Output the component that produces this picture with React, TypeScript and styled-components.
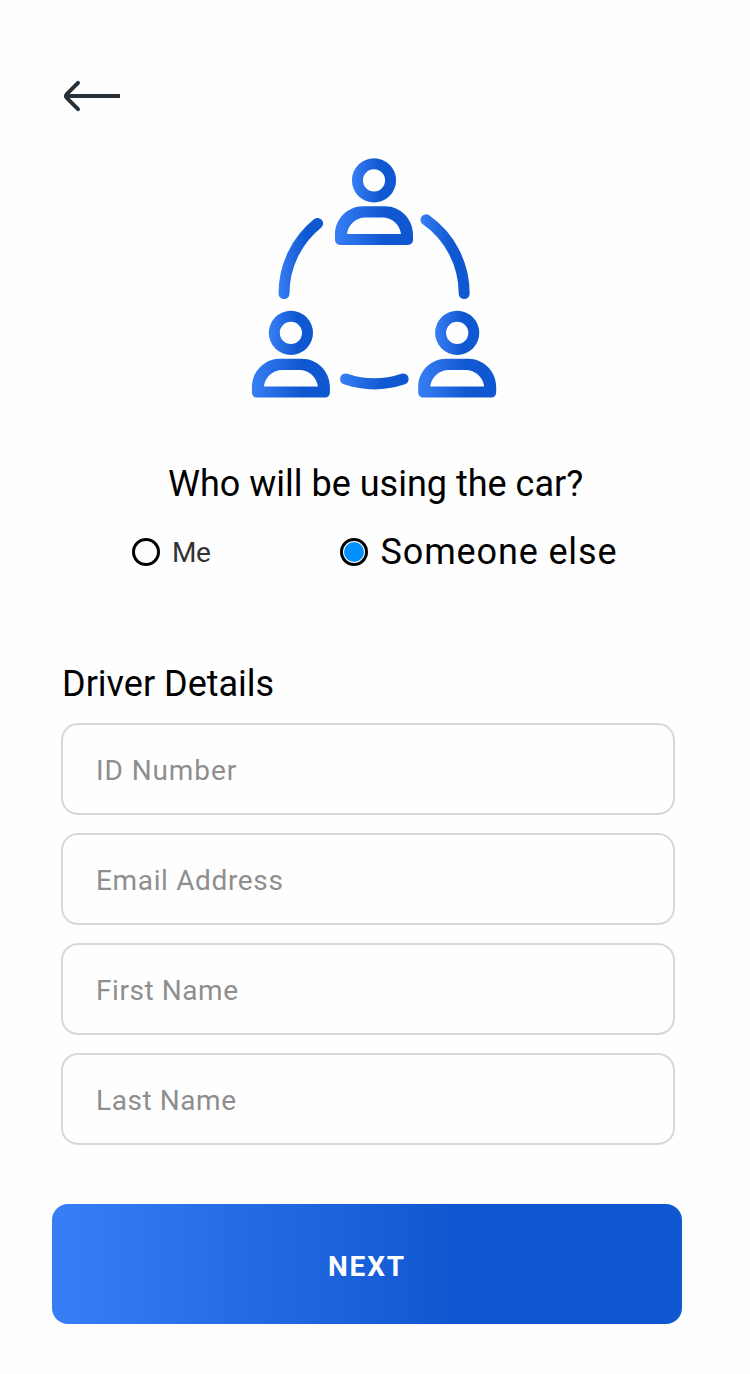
import React, { useState } from 'react';
import styled, { createGlobalStyle } from 'styled-components';

const GlobalStyle = createGlobalStyle`
  * { box-sizing: border-box; }
  body { margin: 0; background: #fefefe; }
`;

const Screen = styled.main`
  display: flex;
  flex-direction: column;
  width: 750px;
  height: 1374px;
  padding: 76px 68px 50px 52px;
  background: #fefefe;
  color: #000;
  font-family: Roboto, "Liberation Sans", sans-serif;
`;

const BackButton = styled.button`
  align-self: flex-start;
  width: 72px;
  height: 40px;
  padding: 0;
  margin-left: 8px;
  border: 0;
  background: none;
  cursor: pointer;
  svg { display: block; }
`;

const Illustration = styled.svg`
  display: block;
  flex: none;
  width: 260px;
  height: 256px;
  margin: 34px 0 0 192px;
`;

const Question = styled.h1`
  margin: 57px 0 0 116px;
  font-size: 36px;
  line-height: 42px;
  font-weight: 400;
  letter-spacing: 0;
  white-space: nowrap;
`;

const Options = styled.div`
  display: flex;
  align-items: center;
  height: 42px;
  margin: 26px 0 0 80px;
`;

const Option = styled.label<{ $selected: boolean }>`
  display: flex;
  align-items: center;
  gap: ${(p) => (p.$selected ? 12.5 : 12)}px;
  width: 208px;
  white-space: nowrap;
  color: ${(p) => (p.$selected ? '#000' : '#333')};
  font-size: ${(p) => (p.$selected ? 36 : 28)}px;
  letter-spacing: ${(p) => (p.$selected ? 0.86 : -0.4)}px;
  line-height: 42px;
`;

const OptionText = styled.span<{ $selected: boolean }>`
  padding-top: ${(p) => (p.$selected ? 0 : 2)}px;
`;

const Radio = styled.input`
  appearance: none;
  flex: none;
  width: 28px;
  height: 28px;
  margin: 0;
  padding: 1px;
  border: 3px solid #000;
  border-radius: 50%;
  background: #fefefe;
  &:checked { background: #0091ff content-box; }
`;

const SectionTitle = styled.h2`
  margin: 90px 0 0 10px;
  font-size: 36px;
  line-height: 42px;
  font-weight: 400;
  letter-spacing: 0;
`;

const Fields = styled.div`
  display: flex;
  flex-direction: column;
  gap: 18px;
  width: 614px;
  margin: 18px 0 0 9px;
`;

const Field = styled.input<{ $spacing: number }>`
  height: 92px;
  padding: 2px 33px 0;
  border: 2px solid #d8d8d8;
  border-radius: 17px;
  background: #fefefe;
  color: #333;
  font-family: inherit;
  font-size: 28px;
  letter-spacing: ${(p) => p.$spacing}px;
  outline: none;
  &::placeholder { color: #8e8e8e; opacity: 1; }
`;

const NextButton = styled.button`
  height: 120px;
  margin-top: 59px;
  padding: 4px 0 0;
  border: 0;
  border-radius: 16px;
  background: linear-gradient(90deg, #387ef5 0%, #1058d1 63%);
  color: #fff;
  font-family: inherit;
  font-size: 28px;
  font-weight: 700;
  letter-spacing: 1.9px;
`;

const GradientStops = () => (
  <>
    <stop offset="0" stopColor="#387ef5" />
    <stop offset="0.63" stopColor="#1058d1" />
  </>
);

const Person = ({ x, y }: { x: number; y: number }) => (
  <g transform={`translate(${x} ${y})`} fill="url(#person)" fillRule="evenodd">
    <path d="M39 0A22.1 22.1 0 1 1 39 44.2A22.1 22.1 0 1 1 39 0ZM39 11A11.1 11.1 0 1 0 39 33.2A11.1 11.1 0 1 0 39 11Z" />
    <path d="M28 48H50C65.500 48 78 60.700 78 76.200V81.800a5 5 0 0 1-5 5H5a5 5 0 0 1-5-5V76.200C0 60.700 12.500 48 28 48ZM12 75.800H66C65 66.200 57 59.200 47.500 59.200H30.500C21 59.200 13 66.200 12 75.800Z" />
  </g>
);

const SharedUsers = () => (
  <Illustration viewBox="244 150 260 256" aria-hidden="true">
    <defs>
      <linearGradient id="person"><GradientStops /></linearGradient>
      <linearGradient id="left" gradientUnits="userSpaceOnUse" x1="278" x2="323"><GradientStops /></linearGradient>
      <linearGradient id="right" gradientUnits="userSpaceOnUse" x1="420" x2="470"><GradientStops /></linearGradient>
      <linearGradient id="bottom" gradientUnits="userSpaceOnUse" x1="340" x2="409"><GradientStops /></linearGradient>
    </defs>
    <Person x={335} y={158.200} />
    <Person x={251.900} y={310.800} />
    <Person x={418.200} y={310.800} />
    <g fill="none" strokeWidth="11" strokeLinecap="round">
      <path d="M284 293.500A90.200 90.200 0 0 1 317.600 223.400" stroke="url(#left)" />
      <path d="M426 219.800A90.200 90.200 0 0 1 464.200 293.500" stroke="url(#right)" />
      <path d="M345.500 379A90.200 90.200 0 0 0 403.200 379" stroke="url(#bottom)" />
    </g>
  </Illustration>
);

const fields = [
  { label: 'ID Number', spacing: 0.9 },
  { label: 'Email Address', spacing: 0.65 },
  { label: 'First Name', spacing: 0.57 },
  { label: 'Last Name', spacing: 0.57 },
];
const drivers = ['Me', 'Someone else'];

export default function App() {
  const [driver, setDriver] = useState('Someone else');
  return (
    <>
      <GlobalStyle />
      <Screen>
        <BackButton aria-label="Back">
          <svg width="72" height="40" viewBox="60 76 72 40" fill="none" stroke="#263038" strokeWidth="4">
            <path d="M66 96H120" />
            <path d="M78 82.800L67.200 93.600Q64.800 96 67.200 98.400L78 109.200" strokeLinecap="round" />
          </svg>
        </BackButton>
        <SharedUsers />
        <Question>Who will be using the car?</Question>
        <Options>
          {drivers.map((name) => (
            <Option key={name} $selected={driver === name}>
              <Radio type="radio" name="driver" checked={driver === name} onChange={() => setDriver(name)} />
              <OptionText $selected={driver === name}>{name}</OptionText>
            </Option>
          ))}
        </Options>
        <SectionTitle>Driver Details</SectionTitle>
        <Fields>
          {fields.map(({ label, spacing }) => (
            <Field key={label} $spacing={spacing} placeholder={label} aria-label={label} />
          ))}
        </Fields>
        <NextButton>NEXT</NextButton>
      </Screen>
    </>
  );
}
